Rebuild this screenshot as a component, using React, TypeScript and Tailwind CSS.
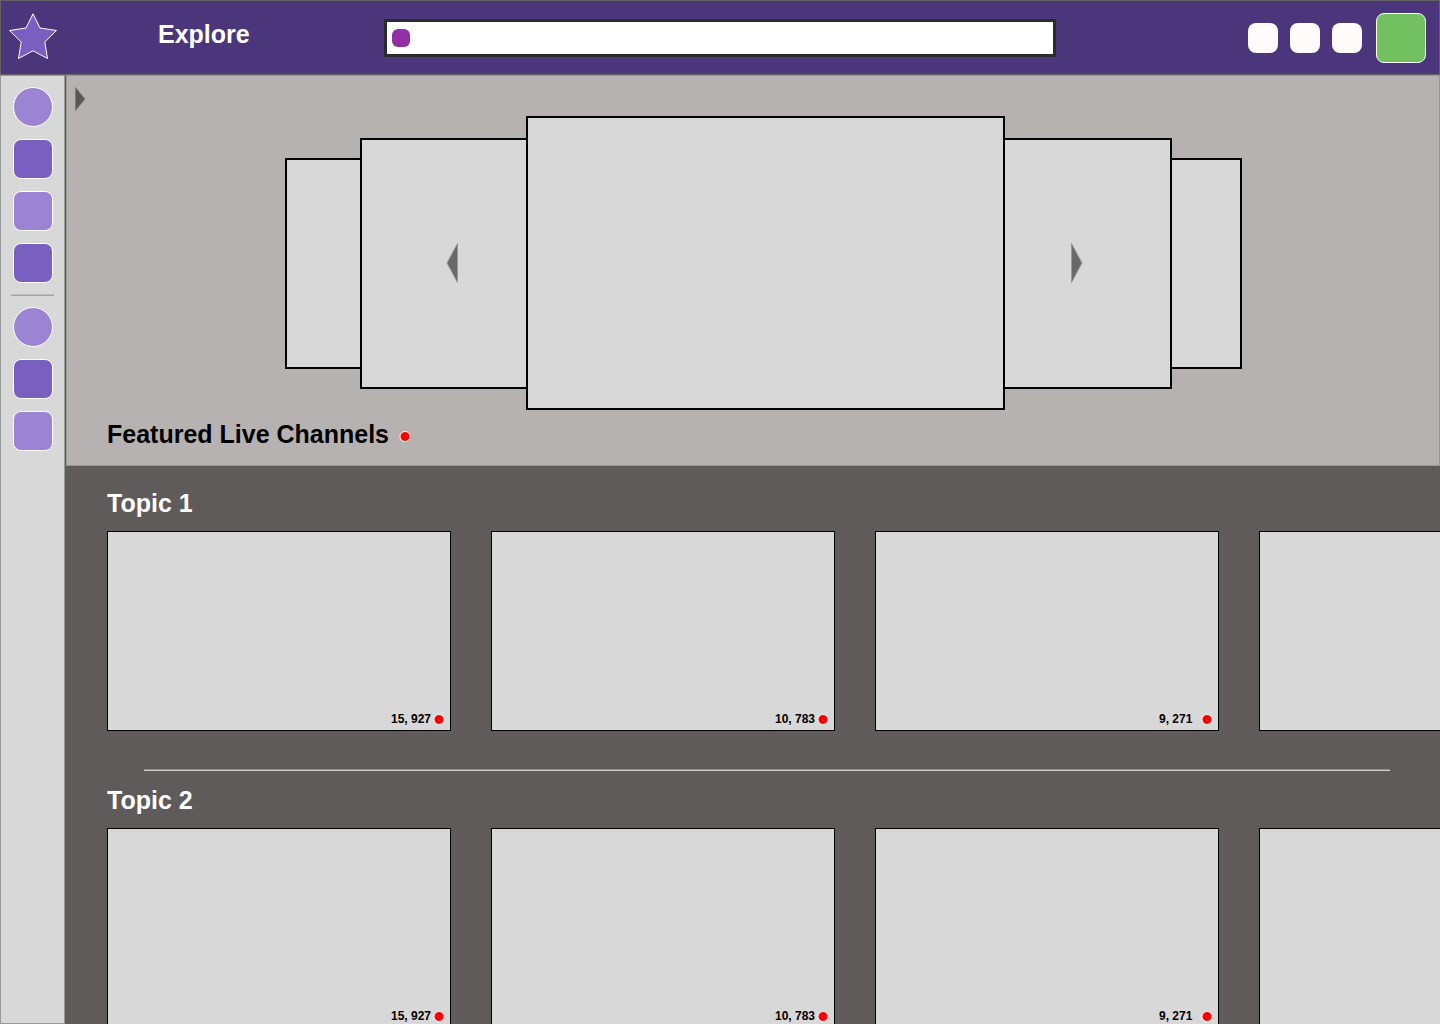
type Channel = { viewers?: string };

const topics: { title: string; channels: Channel[] }[] = [
  {
    title: 'Topic 1',
    channels: [{ viewers: '15, 927' }, { viewers: '10, 783' }, { viewers: '9, 271' }, {}],
  },
  {
    title: 'Topic 2',
    channels: [{ viewers: '15, 927' }, { viewers: '10, 783' }, { viewers: '9, 271' }, {}],
  },
];

function LiveDot() {
  return (
    <svg width="12" height="12" viewBox="0 0 12 12" className="shrink-0" aria-hidden="true">
      <circle cx="6" cy="6.5" r="5" fill="#ff0000" stroke="#ffffff" strokeWidth="1" />
    </svg>
  );
}

function StarLogo() {
  return (
    <svg width="50" height="50" viewBox="0 0 50 50" aria-hidden="true">
      <path
        d="M25 0.8 L32 15 L48.5 17.5 L36.8 29 L39.5 45.5 L25 37.8 L10.5 45.5 L13.2 29 L1.5 17.5 L18 15 Z"
        fill="#795fbf"
        stroke="#ffffff"
        strokeWidth="1"
      />
    </svg>
  );
}

function Header() {
  return (
    <header className="grid h-[75px] shrink-0 grid-cols-[1fr_672px_1fr] items-center border border-[#636363] bg-[#4b367c]">
      <div className="flex items-center">
        <a href="#home" aria-label="Home" className="ml-[7px]">
          <StarLogo />
        </a>
        <a href="#explore" className="mb-2 ml-[100px] text-[25px] leading-8 font-bold text-white">
          Explore
        </a>
      </div>
      <label className="flex h-[38px] items-center gap-2 border-[3px] border-[#2b2b2b] bg-white px-[5px]">
        <span className="size-[18px] shrink-0 rounded-md bg-[#912fa7]" />
        <input type="search" aria-label="Search" className="min-w-0 flex-1 text-base text-black outline-none" />
      </label>
      <div className="flex items-center justify-end gap-3 pr-[13px]">
        <button type="button" aria-label="Browse" className="size-[30px] rounded-lg bg-[#fffbfa]" />
        <button type="button" aria-label="Messages" className="size-[30px] rounded-lg bg-[#fffbfa]" />
        <button type="button" aria-label="Notifications" className="size-[30px] rounded-lg bg-[#fffbfa]" />
        <button
          type="button"
          aria-label="Account"
          className="ml-0.5 size-[50px] rounded-lg border border-white bg-[#73c061]"
        />
      </div>
    </header>
  );
}

function Sidebar() {
  return (
    <nav aria-label="Channels" className="w-[65px] shrink-0 border border-[#999999] bg-[#d8d8d8] pt-[11px] pl-3">
      <div className="flex flex-col gap-3">
        <button type="button" aria-label="Following" className="size-10 rounded-full border border-white bg-[#9b84d3]" />
        <button type="button" aria-label="Channel 1" className="size-10 rounded-lg border border-white bg-[#795fbf]" />
        <button type="button" aria-label="Channel 2" className="size-10 rounded-lg border border-white bg-[#9b84d3]" />
        <button type="button" aria-label="Channel 3" className="size-10 rounded-lg border border-white bg-[#795fbf]" />
      </div>
      <hr className="my-[11px] mr-2.5 -ml-0.5 h-0.5 border-t border-b border-t-[#bebebe] border-b-[#a2a2a2]" />
      <div className="flex flex-col gap-3">
        <button type="button" aria-label="Suggested" className="size-10 rounded-full border border-white bg-[#9b84d3]" />
        <button type="button" aria-label="Channel 4" className="size-10 rounded-lg border border-white bg-[#795fbf]" />
        <button type="button" aria-label="Channel 5" className="size-10 rounded-lg border border-white bg-[#9b84d3]" />
      </div>
    </nav>
  );
}

function Carousel() {
  return (
    <div className="flex items-center justify-center pl-5">
      <div className="h-[211px] w-[77px] border-2 border-black bg-[#d8d8d8]" />
      <div className="z-10 -ml-0.5 flex h-[251px] w-[168px] items-center justify-center border-2 border-black bg-[#d8d8d8] pl-4">
        <button type="button" aria-label="Previous channel">
          <svg width="12" height="42" viewBox="0 0 12 42" aria-hidden="true">
            <path d="M11.5 1.5 L11.5 40.5 L1 21 Z" fill="#696969" stroke="#979797" strokeWidth="1" />
          </svg>
        </button>
      </div>
      <div className="z-20 -ml-0.5 h-[294px] w-[479px] border-2 border-black bg-[#d8d8d8]" />
      <div className="z-10 -ml-0.5 flex h-[251px] w-[169px] items-center justify-center border-2 border-black bg-[#d8d8d8] pr-[21px]">
        <button type="button" aria-label="Next channel">
          <svg width="12" height="42" viewBox="0 0 12 42" aria-hidden="true">
            <path d="M0.5 1.5 L0.5 40.5 L11 21 Z" fill="#696969" stroke="#979797" strokeWidth="1" />
          </svg>
        </button>
      </div>
      <div className="-ml-0.5 h-[211px] w-[72px] border-2 border-black bg-[#d8d8d8]" />
    </div>
  );
}

function Featured() {
  return (
    <section className="relative ml-px border border-[#979797] bg-[#b6b2b1] pt-10 pb-[15px]">
      <button type="button" aria-label="Expand sidebar" className="absolute top-2.5 left-2">
        <svg width="12" height="26" viewBox="0 0 12 26" aria-hidden="true">
          <path d="M0.5 1.5 L0.5 24.5 L10 13 Z" fill="#595757" stroke="#7c7a7a" strokeWidth="1" />
        </svg>
      </button>
      <Carousel />
      <div className="mt-2 flex items-center gap-2.5 pl-10">
        <h2 className="text-[25px] leading-8 font-bold text-black">Featured Live Channels</h2>
        <span className="pt-1">
          <LiveDot />
        </span>
      </div>
    </section>
  );
}

function ChannelCard({ viewers }: Channel) {
  return (
    <article className="flex h-[200px] w-[344px] shrink-0 items-end justify-end border border-black bg-[#d8d8d8] pr-[5px] pb-[3px]">
      {viewers && (
        <p className="flex items-center text-[12px] leading-4 font-bold text-black">
          <span className="w-[42px] whitespace-nowrap">{viewers}</span>
          <LiveDot />
        </p>
      )}
    </article>
  );
}

export default function App() {
  return (
    <div className="flex h-screen flex-col overflow-hidden font-['Liberation_Sans',Arial,sans-serif]">
      <Header />
      <div className="flex min-h-0 flex-1">
        <Sidebar />
        <main className="min-w-0 flex-1 overflow-hidden bg-[#5f5b5a]">
          <Featured />
          {topics.map((topic, index) => (
            <section key={topic.title}>
              {index > 0 && (
                <hr className="mt-[38px] mr-[50px] ml-[79px] h-0.5 border-t border-b border-t-[#8a8786] border-b-[#d3d2d2]" />
              )}
              <h2 className={`${index > 0 ? 'mt-[13px]' : 'mt-[21px]'} pl-[42px] text-[25px] leading-8 font-bold text-white`}>
                {topic.title}
              </h2>
              <div className="mt-3 flex gap-10 overflow-hidden pl-[42px]">
                {topic.channels.map((channel, i) => (
                  <ChannelCard key={i} viewers={channel.viewers} />
                ))}
              </div>
            </section>
          ))}
        </main>
      </div>
    </div>
  );
}
